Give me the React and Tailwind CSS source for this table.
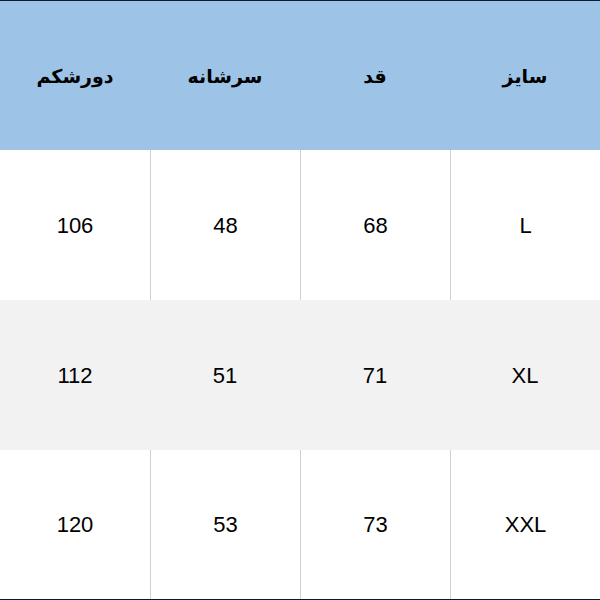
export default function App() {
  const rows = [
    { s: "L", h: "68", sh: "48", d: "106", bg: "bg-white", lines: true },
    { s: "XL", h: "71", sh: "51", d: "112", bg: "bg-[#f2f2f2]", lines: false },
    { s: "XXL", h: "73", sh: "53", d: "120", bg: "bg-white", lines: true },
  ];
  const heads = ["سایز", "قد", "سرشانه", "دورشکم"];
  return (
    <div dir="rtl" className="w-[600px] h-[600px] flex flex-col border-t border-b border-[#0f1a2e] bg-white" style={{ fontFamily: '"Liberation Sans", Arial, sans-serif' }}>
      <div className="h-[149px] grid grid-cols-4 bg-[#9dc3e6]">
        {heads.map((h) => (
          <div key={h} className="flex items-center justify-center text-[19px] font-bold text-black pt-[2px]" style={{ fontFamily: '"DejaVu Sans", sans-serif' }}>
            {h}
          </div>
        ))}
      </div>
      {rows.map((r, i) => (
        <div key={i} className={`${i === 2 ? "flex-1" : "h-[150px]"} grid grid-cols-4 ${r.bg}`}>
          {[r.s, r.h, r.sh, r.d].map((v, j) => (
            <div key={j} dir="ltr" className={`flex items-center justify-center text-[22px] text-black ${r.lines && j < 3 ? "border-l border-[#d0d0d0]" : ""}`}>
              {v}
            </div>
          ))}
        </div>
      ))}
    </div>
  );
}
